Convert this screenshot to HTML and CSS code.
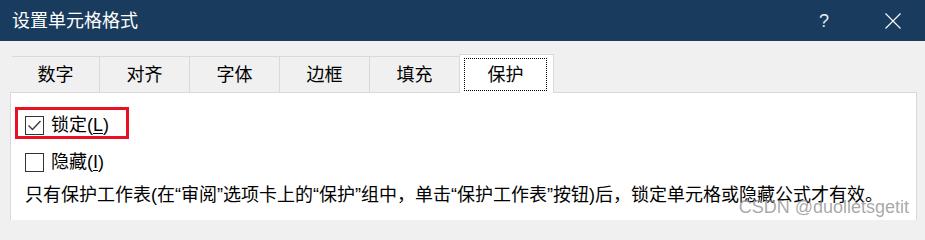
FILE: index.html
```html
<!DOCTYPE html>
<html lang="zh-CN">
<head>
<meta charset="utf-8">
<title>设置单元格格式</title>
<link rel="stylesheet" href="styles.css">
</head>
<body>
<div class="dialog">
  <div class="titlebar">
    <div class="title">设置单元格格式</div>
    <div class="controls">
      <span class="help">?</span>
      <svg class="close" width="16" height="16" viewBox="0 0 16 16"><path d="M0.5 0.5 L15.5 15.5 M15.5 0.5 L0.5 15.5" stroke="#ffffff" stroke-width="1.1" fill="none"/></svg>
    </div>
  </div>
  <div class="main">
    <div class="tabs">
      <div class="tab first">数字</div>
      <div class="tab">对齐</div>
      <div class="tab">字体</div>
      <div class="tab">边框</div>
      <div class="tab last">填充</div>
      <div class="tab active"><span class="focus">保护</span></div>
    </div>
    <div class="panel">
      <div class="highlight">
        <div class="option">
          <span class="box"><svg width="17" height="17" viewBox="0 0 17 17"><path d="M2.5 8.5 L6.5 12.5 L14.5 4" stroke="#3c3c3c" stroke-width="1.4" fill="none"/></svg></span>
          <span class="label">锁定(<u>L</u>)</span>
        </div>
      </div>
      <div class="option plain">
        <span class="box"></span>
        <span class="label">隐藏(<u>I</u>)</span>
      </div>
      <p class="desc">只有保护工作表(在“审阅”选项卡上的“保护”组中，单击“保护工作表”按钮)后，锁定单元格或隐藏公式才有效。</p>
    </div>
  </div>
  <div class="watermark">CSDN @duolletsgetit</div>
</div>
</body>
</html>
```

FILE: styles.css
```css
html, body {
  margin: 0;
  padding: 0;
  background: #f0f0f0;
}
body {
  width: 925px;
  height: 220px;
  overflow: hidden;
  font-family: "Liberation Sans", "Noto Sans CJK SC", sans-serif;
  font-size: 18px;
  color: #000;
}
.dialog {
  position: relative;
  width: 925px;
  height: 220px;
  overflow: hidden;
}
.titlebar {
  height: 41px;
  background: #193b5d;
  color: #fff;
  display: flex;
  align-items: center;
  justify-content: space-between;
  padding: 0 24px 0 12px;
  box-sizing: border-box;
}
.title {
  font-size: 18px;
  line-height: 24px;
}
.controls {
  display: flex;
  align-items: center;
  gap: 56px;
}
.help {
  font-size: 18px;
  line-height: 20px;
  color: #e8ecf0;
}
.close {
  display: block;
}
.main {
  padding: 13px 8px 0 10px;
}
.tabs {
  display: flex;
  align-items: flex-end;
  height: 38px;
  margin-left: 2px;
}
.tab {
  box-sizing: border-box;
  height: 36px;
  width: 90px;
  border-top: 1px solid #d9d9d9;
  border-right: 1px solid #d9d9d9;
  display: flex;
  align-items: center;
  justify-content: center;
  font-size: 18px;
  line-height: 24px;
}
.tab.first {
  width: 88px;
}
.tab.last {
  width: 89px;
  border-right: none;
}
.tab.active {
  position: relative;
  z-index: 1;
  height: 39px;
  width: 95px;
  margin-bottom: -1px;
  background: #fff;
  border-left: 1px solid #d9d9d9;
  padding: 3px 6px 2px 4px;
  align-items: stretch;
}
.focus {
  flex: 1;
  border: 1px dotted #000;
  display: flex;
  align-items: center;
  justify-content: center;
}
.panel {
  background: #fff;
  border: 1px solid #d9d9d9;
  height: 200px;
  box-sizing: border-box;
}
.highlight {
  display: inline-flex;
  margin: 14px 0 0 4px;
  border: 3px solid #e81123;
  padding: 5px 17px 1px 7px;
}
.option {
  display: flex;
  align-items: center;
  height: 20px;
  gap: 7px;
}
.option.plain {
  margin: 10px 0 0 14px;
  height: 26px;
}
.box {
  box-sizing: border-box;
  width: 19px;
  height: 19px;
  border: 1px solid #333;
  background: #fff;
  display: flex;
  align-items: center;
  justify-content: center;
  flex: none;
}
.box svg {
  display: block;
}
.label {
  line-height: 24px;
}
.label u {
  text-decoration: underline;
  text-underline-offset: 2px;
}
.desc {
  margin: 7px 0 0 14px;
  line-height: 26px;
  white-space: nowrap;
}
.watermark {
  position: absolute;
  right: 16px;
  bottom: 3px;
  font-family: "Liberation Sans", sans-serif;
  font-size: 18px;
  color: rgba(140, 140, 140, 0.75);
  line-height: 20px;
}
```
